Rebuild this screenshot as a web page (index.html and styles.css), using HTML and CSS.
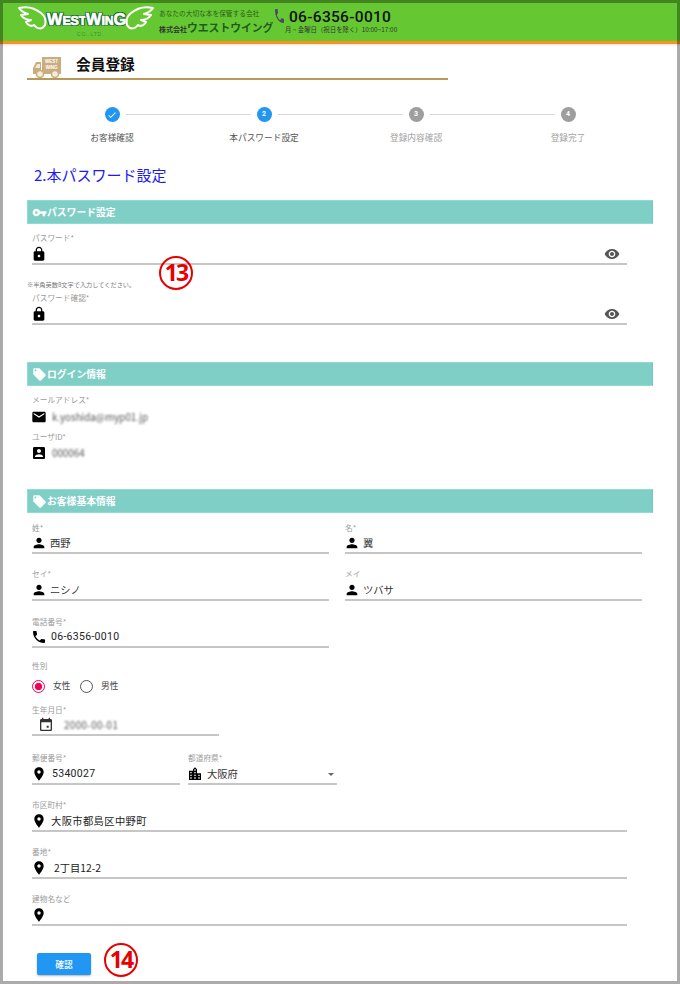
FILE: index.html
```html
<!DOCTYPE html>
<html lang="ja">
<head>
<meta charset="utf-8">
<title>会員登録</title>
<link rel="stylesheet" href="styles.css">
</head>
<body>
<svg class="defs" width="0" height="0">
  <symbol id="i-lock" viewBox="0 0 24 24"><path d="M18 8h-1V6c0-2.76-2.24-5-5-5S7 3.24 7 6v2H6c-1.1 0-2 .9-2 2v10c0 1.1.9 2 2 2h12c1.1 0 2-.9 2-2V10c0-1.1-.9-2-2-2zm-6 9c-1.1 0-2-.9-2-2s.9-2 2-2 2 .9 2 2-.9 2-2 2zm3.1-9H8.9V6c0-1.71 1.39-3.1 3.1-3.1 1.71 0 3.1 1.39 3.1 3.1v2z"/></symbol>
  <symbol id="i-eye" viewBox="0 0 24 24"><path d="M12 4.5C7 4.5 2.73 7.61 1 12c1.73 4.39 6 7.5 11 7.5s9.27-3.11 11-7.5c-1.73-4.39-6-7.5-11-7.5zM12 17c-2.76 0-5-2.24-5-5s2.24-5 5-5 5 2.24 5 5-2.24 5-5 5zm0-8c-1.66 0-3 1.34-3 3s1.34 3 3 3 3-1.34 3-3-1.34-3-3-3z"/></symbol>
  <symbol id="i-key" viewBox="0 0 24 24"><path d="M12.65 10C11.83 7.67 9.61 6 7 6c-3.31 0-6 2.69-6 6s2.69 6 6 6c2.61 0 4.83-1.67 5.65-4H17v4h4v-4h2v-4H12.65zM7 14c-1.1 0-2-.9-2-2s.9-2 2-2 2 .9 2 2-.9 2-2 2z"/></symbol>
  <symbol id="i-tag" viewBox="0 0 24 24"><path d="M21.41 11.58l-9-9C12.05 2.22 11.55 2 11 2H4c-1.1 0-2 .9-2 2v7c0 .55.22 1.05.59 1.42l9 9c.36.36.86.58 1.41.58.55 0 1.05-.22 1.41-.59l7-7c.37-.36.59-.86.59-1.41 0-.55-.23-1.06-.59-1.42zM5.5 7C4.67 7 4 6.33 4 5.5S4.67 4 5.5 4 7 4.67 7 5.5 6.33 7 5.5 7z"/></symbol>
  <symbol id="i-mail" viewBox="0 0 24 24"><path d="M20 4H4c-1.1 0-1.99.9-1.99 2L2 18c0 1.1.9 2 2 2h16c1.1 0 2-.9 2-2V6c0-1.1-.9-2-2-2zm0 4l-8 5-8-5V6l8 5 8-5v2z"/></symbol>
  <symbol id="i-box" viewBox="0 0 24 24"><path d="M3 5v14c0 1.1.89 2 2 2h14c1.1 0 2-.9 2-2V5c0-1.1-.9-2-2-2H5c-1.11 0-2 .9-2 2zm12 4c0 1.66-1.34 3-3 3s-3-1.34-3-3 1.34-3 3-3 3 1.34 3 3zm-9 8c0-2 4-3.1 6-3.1s6 1.1 6 3.1v1H6v-1z"/></symbol>
  <symbol id="i-person" viewBox="0 0 24 24"><path d="M12 12c2.21 0 4-1.79 4-4s-1.79-4-4-4-4 1.79-4 4 1.79 4 4 4zm0 2c-2.67 0-8 1.34-8 4v2h16v-2c0-2.66-5.33-4-8-4z"/></symbol>
  <symbol id="i-phone" viewBox="0 0 24 24"><path d="M6.62 10.79c1.44 2.83 3.76 5.14 6.59 6.59l2.2-2.2c.27-.27.67-.36 1.02-.24 1.12.37 2.33.57 3.57.57.55 0 1 .45 1 1V20c0 .55-.45 1-1 1-9.39 0-17-7.61-17-17 0-.55.45-1 1-1h3.5c.55 0 1 .45 1 1 0 1.25.2 2.45.57 3.57.11.35.03.74-.25 1.02l-2.2 2.2z"/></symbol>
  <symbol id="i-tel" viewBox="3 3 18 18" preserveAspectRatio="none"><path d="M6.62 10.79c1.44 2.83 3.76 5.14 6.59 6.59l2.2-2.2c.27-.27.67-.36 1.02-.24 1.12.37 2.33.57 3.57.57.55 0 1 .45 1 1V20c0 .55-.45 1-1 1-9.39 0-17-7.61-17-17 0-.55.45-1 1-1h3.5c.55 0 1 .45 1 1 0 1.25.2 2.45.57 3.57.11.35.03.74-.25 1.02l-2.2 2.2z"/></symbol>
  <symbol id="i-event" viewBox="0 0 24 24"><path d="M16 13h-3v3h3v-3zM16 1v2H8V1H6v2H5c-1.11 0-1.99.9-1.99 2L3 19c0 1.1.89 2 2 2h14c1.1 0 2-.9 2-2V5c0-1.1-.9-2-2-2h-1V1h-2zm3 18H5V8h14v11z"/></symbol>
  <symbol id="i-pin" viewBox="0 0 24 24"><path d="M12 2C8.13 2 5 5.13 5 9c0 5.25 7 13 7 13s7-7.75 7-13c0-3.87-3.13-7-7-7zm0 9.5c-1.38 0-2.5-1.12-2.5-2.5s1.12-2.5 2.5-2.5 2.5 1.12 2.5 2.5-1.12 2.5-2.5 2.5z"/></symbol>
  <symbol id="i-city" viewBox="0 0 24 24"><path d="M15 11V5l-3-3-3 3v2H3v14h18V11h-6zm-8 8H5v-2h2v2zm0-4H5v-2h2v2zm0-4H5V9h2v2zm6 8h-2v-2h2v2zm0-4h-2v-2h2v2zm0-4h-2V9h2v2zm0-4h-2V5h2v2zm6 12h-2v-2h2v2zm0-4h-2v-2h2v2z"/></symbol>
  <symbol id="i-check" viewBox="0 0 24 24"><path d="M9 16.17L4.83 12l-1.42 1.41L9 19 21 7l-1.41-1.41z"/></symbol>
  <symbol id="i-wing" viewBox="0 0 30 26"><path d="M2 3C10 1 18 3 24 8C28 11 29 16 28 20C25 25 20 24 17 20C14 22 11 20 9 17L14 15C10 15 6 13 4 10L11 9C8 8 4 6 2 3Z"/></symbol>
</svg>

<header class="site-header">
  <div class="logo">
    <div class="logo-row">
      <svg class="wing"><use href="#i-wing"/></svg>
      <span class="logo-name"><span class="cap">W</span>EST<span class="cap">W</span>IN<span class="cap">G</span></span>
      <svg class="wing wing-r"><use href="#i-wing"/></svg>
    </div>
    <div class="logo-sub">CO.,LTD.</div>
  </div>
  <div class="company">
    <div class="tagline">あなたの大切な本を保管する会社</div>
    <div class="company-name"><span class="kk">株式会社</span>ウエストウイング</div>
  </div>
  <svg class="tel-icon"><use href="#i-tel"/></svg>
  <div class="tel">
    <div class="tel-num">06-6356-0010</div>
    <div class="tel-hours">月 ~ 金曜日（祝日を除く）10:00~17:00</div>
  </div>
</header>

<main class="main">
  <div class="page-title">
    <svg class="truck" viewBox="0 0 28 21">
      <rect x="9" y="0" width="19" height="16" fill="#c9ad7e"/>
      <path d="M8 5H3L0 11V17H28V15H8Z" fill="#c9ad7e"/>
      <path d="M4 7H7V11H2Z" fill="#f1e8d8"/>
      <circle cx="7" cy="17" r="3.5" fill="#f4ecdd" stroke="#c9ad7e" stroke-width="1.5"/>
      <circle cx="22" cy="17" r="3.5" fill="#f4ecdd" stroke="#c9ad7e" stroke-width="1.5"/>
      <text x="18.5" y="6" class="truck-text">WEST</text>
      <text x="18.5" y="12" class="truck-text">WING</text>
    </svg>
    <h1 class="title-text">会員登録</h1>
  </div>

  <ol class="stepper">
    <li class="step step-first">
      <div class="step-head"><span class="step-line"></span><span class="step-dot on"><svg class="dot-check"><use href="#i-check"/></svg></span><span class="step-line"></span></div>
      <div class="step-label">お客様確認</div>
    </li>
    <li class="step">
      <div class="step-head"><span class="step-line"></span><span class="step-dot on">2</span><span class="step-line"></span></div>
      <div class="step-label">本パスワード設定</div>
    </li>
    <li class="step step-off">
      <div class="step-head"><span class="step-line"></span><span class="step-dot">3</span><span class="step-line"></span></div>
      <div class="step-label">登録内容確認</div>
    </li>
    <li class="step step-off step-last">
      <div class="step-head"><span class="step-line"></span><span class="step-dot">4</span><span class="step-line"></span></div>
      <div class="step-label">登録完了</div>
    </li>
  </ol>

  <h2 class="heading">2.本パスワード設定</h2>

  <div class="bar"><svg class="bar-icon"><use href="#i-key"/></svg>パスワード設定</div>
  <div class="field f-first w-full">
    <div class="label">パスワード*</div>
    <div class="control tall"><svg class="ico"><use href="#i-lock"/></svg><svg class="eye"><use href="#i-eye"/></svg></div>
  </div>
  <div class="note">※半角英数8文字で入力してください。</div>
  <div class="field f-note w-full">
    <div class="label">パスワード確認*</div>
    <div class="control tall"><svg class="ico"><use href="#i-lock"/></svg><svg class="eye"><use href="#i-eye"/></svg></div>
  </div>

  <div class="bar bar-login"><svg class="bar-icon"><use href="#i-tag"/></svg>ログイン情報</div>
  <div class="field f-first">
    <div class="label">メールアドレス*</div>
    <div class="control plain"><svg class="ico"><use href="#i-mail"/></svg><span class="value blur">k.yoshida@myp01.jp</span></div>
  </div>
  <div class="field f-user">
    <div class="label">ユーザID*</div>
    <div class="control plain c-user"><svg class="ico"><use href="#i-box"/></svg><span class="value blur">000064</span></div>
  </div>

  <div class="bar bar-basic"><svg class="bar-icon"><use href="#i-tag"/></svg>お客様基本情報</div>
  <div class="cols cols-first">
    <div class="field">
      <div class="label">姓*</div>
      <div class="control"><svg class="ico"><use href="#i-person"/></svg><span class="value">西野</span></div>
    </div>
    <div class="field">
      <div class="label">名*</div>
      <div class="control"><svg class="ico"><use href="#i-person"/></svg><span class="value">翼</span></div>
    </div>
  </div>
  <div class="cols cols-kana">
    <div class="field">
      <div class="label">セイ*</div>
      <div class="control tall"><svg class="ico"><use href="#i-person"/></svg><span class="value">ニシノ</span></div>
    </div>
    <div class="field">
      <div class="label">メイ</div>
      <div class="control tall"><svg class="ico"><use href="#i-person"/></svg><span class="value">ツバサ</span></div>
    </div>
  </div>
  <div class="field f-tel w-half">
    <div class="label">電話番号*</div>
    <div class="control"><svg class="ico"><use href="#i-phone"/></svg><span class="value v-num">06-6356-0010</span></div>
  </div>
  <div class="label l-gender">性別</div>
  <div class="radios">
    <span class="radio checked"></span><span class="radio-text">女性</span>
    <span class="radio"></span><span class="radio-text">男性</span>
  </div>
  <div class="field f-birth w-date">
    <div class="label">生年月日*</div>
    <div class="control c-date"><svg class="ico"><use href="#i-event"/></svg><span class="value blur v-date">2000-00-01</span></div>
  </div>
  <div class="addr-row">
    <div class="field">
      <div class="label">郵便番号*</div>
      <div class="control tall"><svg class="ico"><use href="#i-pin"/></svg><span class="value v-num v-zip">5340027</span></div>
    </div>
    <div class="field">
      <div class="label">都道府県*</div>
      <div class="control tall"><svg class="ico"><use href="#i-city"/></svg><span class="value v-pref">大阪府</span><span class="caret"></span></div>
    </div>
  </div>
  <div class="field f-addr w-full">
    <div class="label">市区町村*</div>
    <div class="control tall"><svg class="ico"><use href="#i-pin"/></svg><span class="value v-city">大阪市都島区中野町</span></div>
  </div>
  <div class="field f-addr w-full">
    <div class="label">番地*</div>
    <div class="control tall"><svg class="ico"><use href="#i-pin"/></svg><span class="value v-block">2丁目12-2</span></div>
  </div>
  <div class="field f-addr w-full">
    <div class="label">建物名など</div>
    <div class="control tall"><svg class="ico"><use href="#i-pin"/></svg></div>
  </div>
  <button class="submit" type="button">確認</button>
</main>

<div class="marker marker-13">13</div>
<div class="marker marker-14">14</div>
<div class="frame"></div>
</body>
</html>
```

FILE: styles.css
```css
* { box-sizing: border-box; }
html, body { margin: 0; padding: 0; }
body {
  position: relative;
  width: 680px;
  height: 984px;
  overflow: hidden;
  background: #fff;
  color: #333;
  font-family: "Noto Sans CJK JP", "Noto Sans", Roboto, sans-serif;
}
.defs { position: absolute; }

/* Header */
.site-header {
  display: flex;
  height: 44px;
  padding-left: 17px;
  background: #65c832;
  border-bottom: 3px solid #f7931e;
  box-shadow: 0 1px 2px rgba(0, 0, 0, .12);
}
.logo { width: 138px; padding-top: 5px; }
.logo-row { display: flex; align-items: flex-start; height: 26px; }
.wing {
  width: 30px;
  height: 26px;
  flex: none;
  fill: #65c832;
  stroke: #fff;
  stroke-width: 2;
  stroke-linejoin: round;
}
.wing-r { transform: scaleX(-1); margin-left: -1px; }
.logo-name {
  width: 79px;
  margin-top: 4px;
  color: #fff;
  font: 700 12.5px/20px "Liberation Sans", sans-serif;
  white-space: nowrap;
  text-align: center;
  letter-spacing: -.2px;
  -webkit-text-stroke: .7px #fff;
  text-shadow: 1.4px 0 0 #17682c, -1.4px 0 0 #17682c, 0 1.4px 0 #17682c, 0 -1.4px 0 #17682c, 1px 1px 0 #17682c, -1px -1px 0 #17682c, 1px -1px 0 #17682c, -1px 1px 0 #17682c;
}
.cap { font-size: 16.5px; }
.logo-sub {
  padding-left: 60px;
  color: #3b8f2c;
  font: 5px/6px "Liberation Sans", sans-serif;
  letter-spacing: .8px;
}
.company { width: 118px; margin-left: 4px; padding-top: 8px; color: #2f5d1e; }
.tagline { font-size: 6.7px; line-height: 10px; white-space: nowrap; }
.company-name { margin-top: 1px; font-size: 10.8px; font-weight: 700; line-height: 16px; white-space: nowrap; color: #1f5a24; }
.kk { font-size: 7px; color: #333; }
.tel-icon { width: 9px; height: 14px; margin: 9px 0 0 -2px; flex: none; fill: #4c4a5e; }
.tel { padding-top: 7px; }
.tel-num {
  padding-left: 5px;
  color: #111;
  font: 500 15.5px/20px Roboto, sans-serif;
  letter-spacing: .3px;
  white-space: nowrap;
}
.tel-hours { margin-top: -1px; padding-left: 1px; font-size: 6.4px; line-height: 8px; color: #333; white-space: nowrap; }

/* Main */
.main { padding: 0 0 0 32px; }
.page-title {
  display: flex;
  align-items: flex-start;
  width: 421px;
  height: 36px;
  margin-left: -5px;
  padding: 13px 0 0 6px;
  border-bottom: 2px solid #b8995a;
}
.truck { width: 28px; height: 21px; flex: none; }
.truck-text { fill: #fff; font: 700 4.5px "Liberation Sans", sans-serif; text-anchor: middle; }
.title-text { margin: -1px 0 0 15px; color: #111; font-size: 14.7px; font-weight: 700; line-height: 15px; }

.stepper {
  display: grid;
  grid-template-columns: repeat(4, 152px);
  margin: 0 0 0 4px;
  padding: 27px 0 0;
  list-style: none;
}
.step-head { display: flex; align-items: center; gap: 6px; height: 15px; }
.step-line { flex: 1; height: 1px; background: #d9d9d9; }
.step-first .step-line:first-child, .step-last .step-line:last-child { visibility: hidden; }
.step-dot {
  display: flex;
  align-items: center;
  justify-content: center;
  width: 15px;
  height: 15px;
  border-radius: 50%;
  background: #9e9e9e;
  color: #fff;
  font: 700 7px/15px Roboto, sans-serif;
}
.step-dot.on { background: #2196f3; }
.dot-check { width: 10px; height: 10px; fill: #fff; }
.step-label { margin-top: 10px; color: #555; font-size: 8.7px; line-height: 12px; text-align: center; }
.step-off .step-label { color: #a3a3a3; }

.heading { margin: 21px 0 0 2px; color: #1c1cf0; font-size: 15px; font-weight: 400; line-height: 20px; }

.bar {
  display: flex;
  align-items: center;
  width: 626px;
  height: 24px;
  margin: 15px 0 0 -5px;
  padding-left: 4px;
  background: #80cfc7;
  border: 1px solid #8edbd3;
  border-color: #8fdcd4 #72c8bf #8fdcd4 #8fdcd4;
  color: #fff;
  font-size: 9.8px;
  font-weight: 700;
  line-height: 12px;
}
.bar-icon { width: 15px; height: 15px; flex: none; fill: #fff; }
.bar-login { margin-top: 37px; }
.bar-basic { margin-top: 25px; }

.label { height: 12px; color: #9a9a9a; font-size: 7.7px; line-height: 12px; white-space: nowrap; }
.control {
  display: flex;
  align-items: center;
  height: 20px;
  border-bottom: 2px solid #c6c6c6;
}
.control.tall { height: 21px; }
.control.plain { height: 21px; border-bottom: 0; }
.control.c-user { padding-bottom: 2px; }
.ico { width: 16px; height: 16px; margin-left: -1px; flex: none; fill: #000; }
.eye { width: 16px; height: 16px; margin-left: auto; margin-right: 7px; flex: none; fill: #555; }
.value { margin-left: 3px; color: #333; font-size: 10.3px; line-height: 16px; white-space: nowrap; }
.blur { margin-left: 5px; color: #555; font-size: 9.8px; filter: blur(1.1px); }
.v-num { margin-left: 4px; color: #222; font: 400 10.5px/16px Roboto, sans-serif; letter-spacing: .3px; }
.v-zip { margin-left: 5px; }
.v-pref { margin-left: 4px; }
.v-city { margin-left: 4px; color: #222; letter-spacing: .35px; }
.v-block { margin-left: 7px; color: #222; }

.w-full { width: 595px; }
.w-half { width: 297px; }
.w-date { width: 187px; }
.f-first { margin-top: 8px; }
.note { margin: 15px 0 0 -5px; color: #777; font-size: 6.2px; line-height: 10px; white-space: nowrap; }
.f-note { margin-top: 2px; }
.f-user { margin-top: 4px; }
.cols { display: grid; grid-template-columns: 297px 297px; column-gap: 16px; }
.cols-first { margin-top: 9px; }
.cols-kana { margin-top: 14px; }
.f-tel { margin-top: 15px; }
.l-gender { margin-top: 12px; }
.radios { display: flex; align-items: center; height: 20px; margin-top: 4px; }
.radio {
  width: 13px;
  height: 13px;
  border: 1.3px solid #555;
  border-radius: 50%;
  flex: none;
}
.radio.checked { border-color: #f50057; background: radial-gradient(circle, #f50057 0 3.4px, #fff 3.9px); }
.radio-text { margin: 0 10px 0 8px; color: #444; font-size: 8.7px; line-height: 12px; width: 17px; white-space: nowrap; }
.f-birth { margin-top: 8px; }
.c-date .ico { margin-left: 6px; fill: #333; }
.v-date { margin-left: 10px; letter-spacing: .4px; }
.addr-row { display: grid; grid-template-columns: 148px 149px; column-gap: 8px; margin-top: 16px; }
.caret { width: 0; height: 0; margin: 2px 3px 0 auto; border: 3.5px solid transparent; border-top-color: #666; border-bottom: 0; }
.f-addr { margin-top: 14px; }

.submit {
  display: block;
  width: 54px;
  height: 22px;
  margin: 27px 0 0 5px;
  padding: 0;
  border: 0;
  border-radius: 2px;
  background: #2196f3;
  box-shadow: 0 1px 2px rgba(0, 0, 0, .3);
  color: #fff;
  font-family: inherit;
  font-size: 8.7px;
  font-weight: 500;
}

/* Overlays */
.marker {
  position: absolute;
  width: 34px;
  height: 34px;
  border: 2.3px solid #e80000;
  border-radius: 50%;
  color: #e80000;
  font: 700 23px/28px "Open Sans", sans-serif;
  letter-spacing: -1.8px;
  text-align: center;
}
.marker-13 { left: 159px; top: 256px; }
.marker-14 { left: 104px; top: 943px; }
.frame {
  position: absolute;
  inset: 0;
  border: 3px solid rgba(0, 0, 0, .33);
  pointer-events: none;
}
```
